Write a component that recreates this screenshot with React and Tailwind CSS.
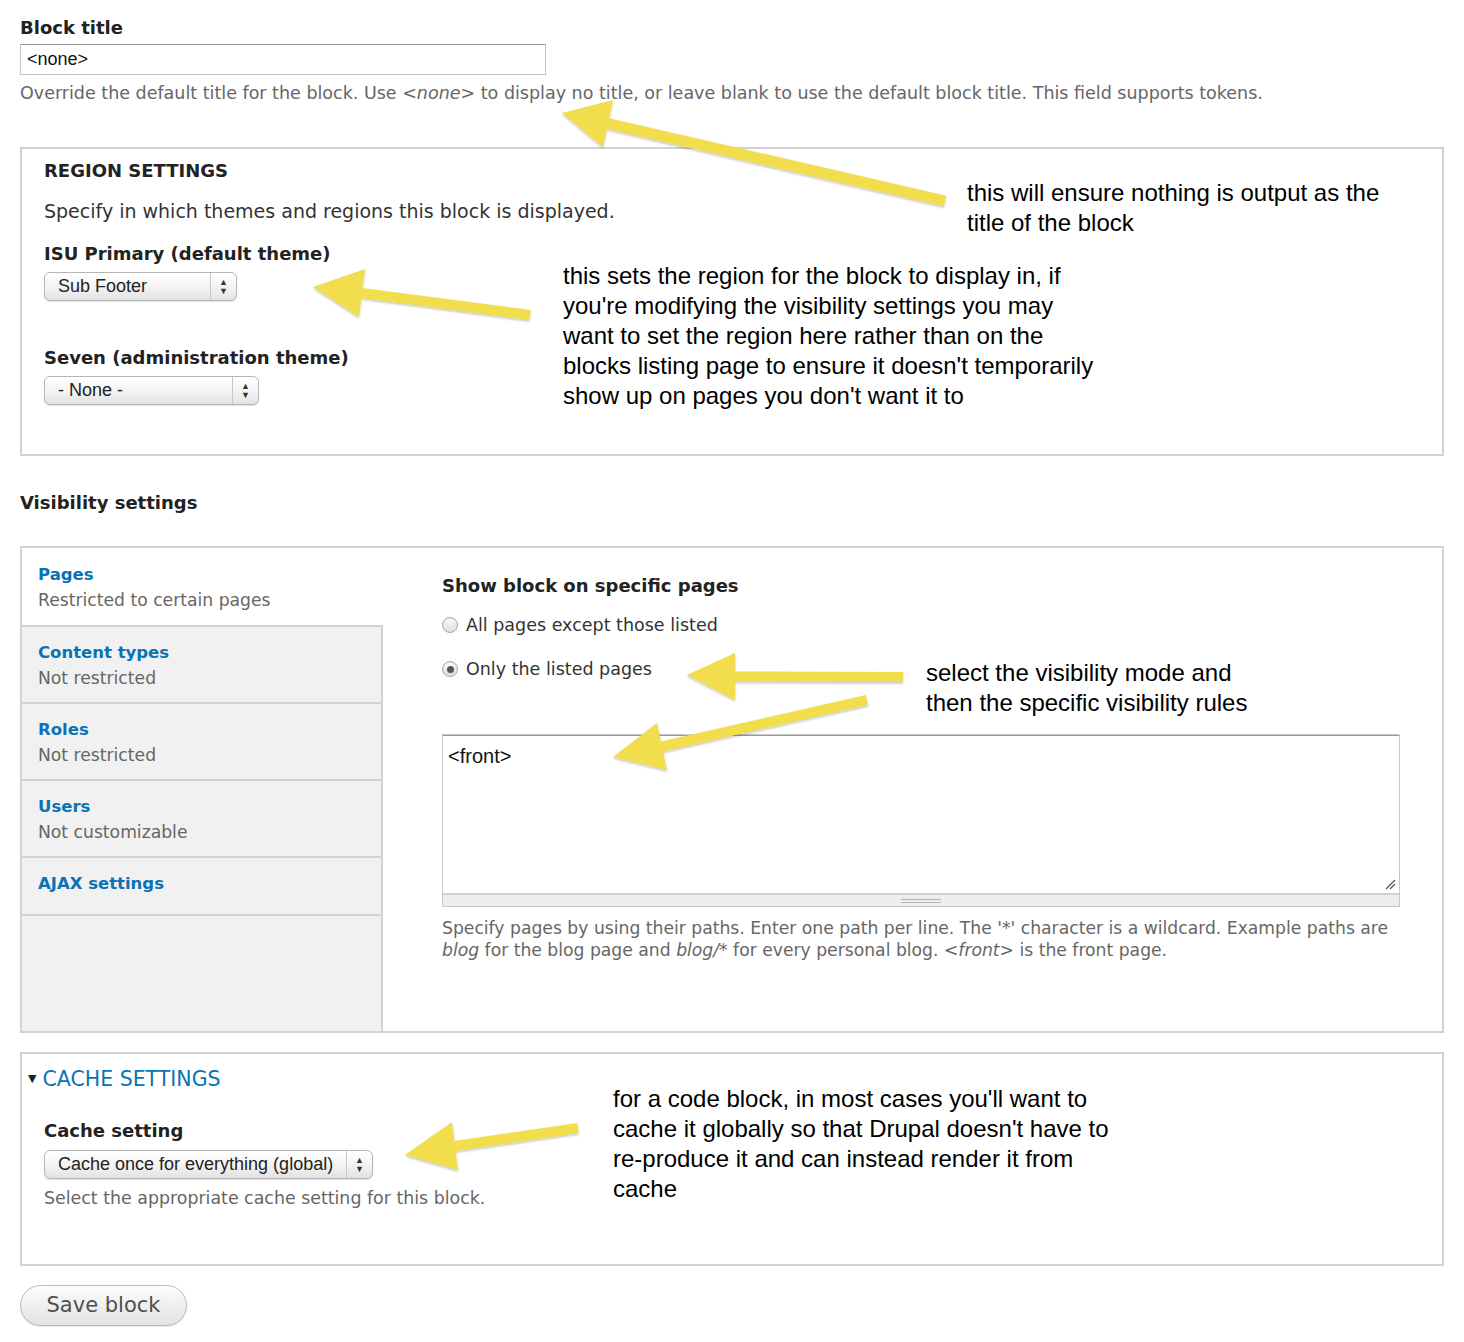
import React from 'react'

const ui = { fontFamily: '"DejaVu Sans", "Liberation Sans", sans-serif' }
const mac = { fontFamily: '"Liberation Sans", Arial, sans-serif' }

function Select({ label, width }) {
  return (
    <div
      className={`flex h-[29px] items-stretch rounded-[6px] border border-[#b5b5b5] bg-gradient-to-b from-white via-[#f4f4f4] to-[#e2e2e2] shadow-[0_1px_1px_rgba(0,0,0,0.12)] ${width}`}
      style={mac}
    >
      <div className="flex flex-1 items-center pl-[13px] text-[18px] text-[#222]">{label}</div>
      <div className="flex w-[26px] flex-col items-center justify-center border-l border-[#c8c8c8] text-[9px] leading-[9px] text-[#333]">
        <span>▲</span>
        <span>▼</span>
      </div>
    </div>
  )
}

function Radio({ checked, label }) {
  return (
    <div className="flex items-center gap-[8px] text-[17.5px] leading-[24px] text-[#333]">
      <span className="flex h-[16px] w-[16px] items-center justify-center rounded-full border border-[#a9a9a9] bg-gradient-to-b from-[#fdfdfd] to-[#dcdcdc] shadow-[inset_0_1px_1px_rgba(0,0,0,0.08)]">
        {checked && <span className="h-[7px] w-[7px] rounded-full bg-[#555]"></span>}
      </span>
      {label}
    </div>
  )
}

const TABS = [
  { title: 'Pages', summary: 'Restricted to certain pages', active: true },
  { title: 'Content types', summary: 'Not restricted' },
  { title: 'Roles', summary: 'Not restricted' },
  { title: 'Users', summary: 'Not customizable' },
  { title: 'AJAX settings' },
]

function Arrow({ tail, tip, a, b, w = 10 }) {
  const mid = [(a[0] + b[0]) / 2, (a[1] + b[1]) / 2]
  return (
    <g filter="url(#shadow)">
      <line x1={tail[0]} y1={tail[1]} x2={mid[0]} y2={mid[1]} stroke="#f2dd4d" strokeWidth={w} />
      <polygon points={`${tip[0]},${tip[1]} ${a[0]},${a[1]} ${b[0]},${b[1]}`} fill="#f2dd4d" />
    </g>
  )
}

export default function App() {
  return (
    <div className="relative h-[1342px] w-[1464px] overflow-hidden bg-white" style={ui}>
      <div className="px-[20px] pt-[16px]">
        <div className="text-[18px] font-bold leading-[24px] text-[#222]">Block title</div>
        <div
          className="mt-[4px] flex h-[31px] w-[526px] items-center border border-[#c4c4c4] border-t-[#9a9a9a] pl-[6px] text-[18px] text-[#111]"
          style={mac}
        >
          &lt;none&gt;
        </div>
        <div className="mt-[7px] text-[17.5px] leading-[22px] text-[#666]">
          Override the default title for the block. Use <em>&lt;none&gt;</em> to display no title, or leave blank to use the default block title. This field supports tokens.
        </div>

        <div className="mt-[43px] h-[309px] border-2 border-[#d2d2d2] px-[22px] pt-[10px]">
          <div className="text-[18px] font-bold uppercase leading-[24px] text-[#222]">Region settings</div>
          <div className="mt-[16px] text-[19px] leading-[24px] text-[#333]">
            Specify in which themes and regions this block is displayed.
          </div>
          <div className="mt-[19px] text-[18px] font-bold leading-[24px] text-[#222]">ISU Primary (default theme)</div>
          <div className="mt-[6px]">
            <Select label="Sub Footer" width="w-[193px]" />
          </div>
          <div className="mt-[45px] text-[18px] font-bold leading-[24px] text-[#222]">Seven (administration theme)</div>
          <div className="mt-[6px]">
            <Select label="- None -" width="w-[215px]" />
          </div>
        </div>

        <div className="mt-[35px] text-[18px] font-bold leading-[24px] text-[#222]">Visibility settings</div>

        <div className="mt-[31px] flex h-[487px] border-2 border-[#d2d2d2]">
          <div className="flex w-[361px] flex-col border-r-2 border-[#d2d2d2] bg-[#f1f1f1]">
            {TABS.map((t) => (
              <div
                key={t.title}
                className={`border-b-2 border-[#d2d2d2] px-[16px] ${t.active ? '-mr-[2px] bg-white pb-[13px] pt-[15px]' : t.summary ? 'pb-[12px] pt-[14px]' : 'pb-[18px] pt-[14px]'}`}
              >
                <div className="text-[16.5px] font-bold leading-[24px] text-[#0b72b5]">{t.title}</div>
                {t.summary && <div className="mt-[1px] text-[17.2px] leading-[24px] text-[#666]">{t.summary}</div>}
              </div>
            ))}
          </div>
          <div className="flex-1 pl-[59px] pr-[42px] pt-[26px]">
            <div className="text-[18px] font-bold leading-[24px] text-[#222]">Show block on specific pages</div>
            <div className="mt-[15px]">
              <Radio label="All pages except those listed" />
            </div>
            <div className="mt-[20px]">
              <Radio checked label="Only the listed pages" />
            </div>
            <div className="mt-[53px] border border-[#c8c8c8]">
              <div
                className="relative h-[158px] border-t border-[#9a9a9a] bg-white pl-[5px] pt-[5px] text-[20px] text-[#111]"
                style={mac}
              >
                &lt;front&gt;
                <svg className="absolute bottom-[3px] right-[3px]" width="12" height="12" viewBox="0 0 12 12">
                  <line x1="2" y1="11" x2="11" y2="2" stroke="#555" strokeWidth="1.2" />
                  <line x1="6" y1="11" x2="11" y2="6" stroke="#555" strokeWidth="1.2" />
                </svg>
              </div>
              <div className="flex h-[13px] flex-col items-center justify-center gap-[2px] border-t-2 border-[#d0d0d0] bg-[#eeeeee]">
                <span className="h-px w-[40px] bg-[#b5b5b5]"></span>
                <span className="h-px w-[40px] bg-[#b5b5b5]"></span>
              </div>
            </div>
            <div className="mt-[10px] text-[17.2px] leading-[22px] text-[#666]">
              Specify pages by using their paths. Enter one path per line. The '*' character is a wildcard. Example paths are{' '}
              <em>blog</em> for the blog page and <em>blog/*</em> for every personal blog. <em>&lt;front&gt;</em> is the front page.
            </div>
          </div>
        </div>

        <div className="mt-[19px] h-[214px] border-2 border-[#d2d2d2] px-[22px] pt-[13px]">
          <div className="-ml-[16px] flex items-center gap-[6px] leading-[24px]">
            <span className="text-[11px] text-[#222]">▼</span>
            <span className="text-[20.5px] uppercase text-[#0b72b5]">Cache settings</span>
          </div>
          <div className="mt-[28px] text-[18px] font-bold leading-[24px] text-[#222]">Cache setting</div>
          <div className="mt-[7px]">
            <Select label="Cache once for everything (global)" width="w-[329px]" />
          </div>
          <div className="mt-[8px] text-[17.4px] leading-[22px] text-[#666]">
            Select the appropriate cache setting for this block.
          </div>
        </div>

        <button className="mt-[19px] flex h-[41px] w-[167px] items-center justify-center rounded-full border border-[#b9b9b9] bg-gradient-to-b from-[#fcfcfc] to-[#e3e3e3] text-[21px] text-[#4f4f4f] shadow-[0_1px_1px_rgba(0,0,0,0.1)]">
          Save block
        </button>
      </div>

      {/* annotations laid over the form */}
      <div className="absolute left-[967px] top-[178px] text-[24px] leading-[30px] text-black" style={mac}>
        this will ensure nothing is output as the
        <br />
        title of the block
      </div>
      <div className="absolute left-[563px] top-[261px] text-[24px] leading-[30px] text-black" style={mac}>
        this sets the region for the block to display in, if
        <br />
        you're modifying the visibility settings you may
        <br />
        want to set the region here rather than on the
        <br />
        blocks listing page to ensure it doesn't temporarily
        <br />
        show up on pages you don't want it to
      </div>
      <div className="absolute left-[926px] top-[658px] text-[24px] leading-[30px] text-black" style={mac}>
        select the visibility mode and
        <br />
        then the specific visibility rules
      </div>
      <div className="absolute left-[613px] top-[1084px] text-[24px] leading-[30px] text-black" style={mac}>
        for a code block, in most cases you'll want to
        <br />
        cache it globally so that Drupal doesn't have to
        <br />
        re-produce it and can instead render it from
        <br />
        cache
      </div>

      <svg className="pointer-events-none absolute inset-0" width="1464" height="1342">
        <defs>
          <filter id="shadow" x="-10%" y="-10%" width="120%" height="130%">
            <feDropShadow dx="0" dy="1.5" stdDeviation="1" floodColor="#000" floodOpacity="0.25" />
          </filter>
        </defs>
        <Arrow tail={[945, 201]} tip={[562, 113]} a={[613, 100]} b={[603, 147]} w={11} />
        <Arrow tail={[530, 315]} tip={[313, 287]} a={[365, 269]} b={[359, 317]} w={10} />
        <Arrow tail={[903, 677]} tip={[687, 675]} a={[735, 653]} b={[735, 700]} w={10} />
        <Arrow tail={[867, 700]} tip={[613, 757]} a={[657, 723]} b={[667, 770]} w={10} />
        <Arrow tail={[578, 1128]} tip={[405, 1155]} a={[452, 1122]} b={[458, 1170]} w={10} />
      </svg>
    </div>
  )
}
